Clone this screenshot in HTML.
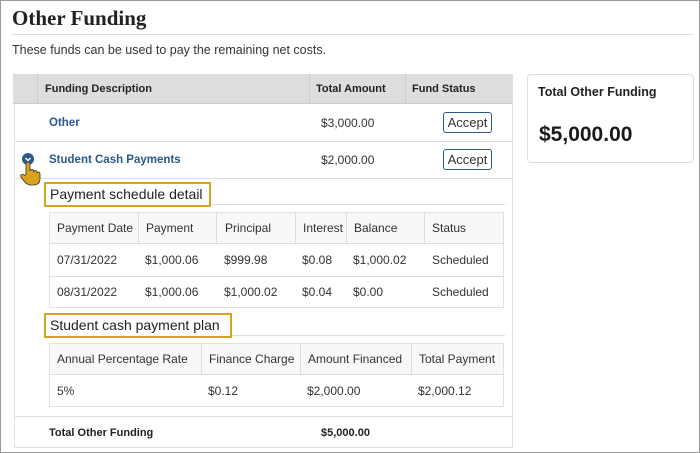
<!DOCTYPE html>
<html><head><meta charset="utf-8"><style>
*{margin:0;padding:0;box-sizing:border-box}
body{width:700px;height:453px;background:#fff;font-family:"Liberation Sans",sans-serif;color:#333;position:relative;overflow:hidden}
.a{position:absolute}
.frame{left:0;top:0;width:700px;height:453px;border:1px solid #999}
.t{position:absolute;white-space:nowrap;font-size:12px;line-height:14px}
.hl{position:absolute;height:1px;background:#ddd}
.vl{position:absolute;width:1px;background:#ddd}
.b{font-weight:bold;color:#222}
.lnk{color:#2a5a8a;font-weight:bold;font-size:11.5px}
.btn{position:absolute;border:1px solid #2a5a8a;border-radius:3px;font-size:13px;color:#333;text-align:center;line-height:19px;background:#fff}
.gold{position:absolute;border:2px solid #d4a31f;font-size:14px;color:#222;padding-left:4px;line-height:21px}
</style></head><body>
<div class="a frame"></div>
<div class="t" style="left:12px;top:6px;font-family:'Liberation Serif',serif;font-weight:bold;font-size:21px;line-height:24px;color:#222">Other Funding</div>
<div class="hl" style="left:12px;top:34px;width:681px"></div>
<div class="t" style="left:12px;top:43px;font-size:12.5px">These funds can be used to pay the remaining net costs.</div>

<div class="a" style="left:13px;top:74px;width:500px;height:30px;background:#dedede;border-bottom:1px solid #ccc"></div>
<div class="vl" style="left:37px;top:74px;height:30px;background:#ccc"></div>
<div class="vl" style="left:309px;top:74px;height:30px;background:#ccc"></div>
<div class="vl" style="left:405px;top:74px;height:30px;background:#ccc"></div>
<div class="t b" style="left:45px;top:82px;font-size:11px">Funding Description</div>
<div class="t b" style="left:316px;top:82px;font-size:11px">Total Amount</div>
<div class="t b" style="left:412px;top:82px;font-size:11px">Fund Status</div>
<div class="vl" style="left:14px;top:104px;height:343px"></div>
<div class="vl" style="left:512px;top:104px;height:343px"></div>

<div class="t lnk" style="left:49px;top:116px">Other</div>
<div class="t" style="left:321px;top:116px">$3,000.00</div>
<div class="btn" style="left:443px;top:112px;width:49px;height:21px">Accept</div>
<div class="hl" style="left:14px;top:141px;width:499px"></div>
<div class="t lnk" style="left:49px;top:153px">Student Cash Payments</div>
<div class="t" style="left:321px;top:153px">$2,000.00</div>
<div class="btn" style="left:443px;top:149px;width:49px;height:21px">Accept</div>
<div class="hl" style="left:14px;top:178px;width:499px"></div>

<svg class="a" style="left:18px;top:150px" width="24" height="36" viewBox="0 0 24 36">
<circle cx="10" cy="9" r="6" fill="#2a5a8a"/>
<path d="M7.5 8 L10 10.5 L12.5 8" stroke="#fff" stroke-width="1.4" fill="none"/>
<path d="M8 24 L8 14 Q8 12 10 12 Q12 12 12 14 L12 21 Q12 19.5 13.8 19.5 Q15.5 19.5 15.5 21 L15.5 22 Q15.5 20.5 17.2 20.5 Q19 20.5 19 22 L19 23 Q19 22 20.5 22 Q22 22 22 24 L22 29 Q22 34 17 35 L12 35 Q8 34 6 31 L3 27 Q2 25 3.5 24.5 Q5 24 6.5 25.5 Z" fill="#d9a21b" stroke="#333" stroke-width="0.8"/>
</svg>

<div class="gold" style="left:44px;top:182px;width:167px;height:25px">Payment schedule detail</div>
<div class="hl" style="left:211px;top:204px;width:294px"></div>
<div class="a" style="left:49px;top:212px;width:455px;height:96px;border:1px solid #e2e2e2"></div>
<div class="a" style="left:50px;top:213px;width:453px;height:31px;background:#f8f8f8;border-bottom:1px solid #ddd"></div>
<div class="hl" style="left:50px;top:276px;width:453px"></div>
<div class="vl" style="left:138px;top:213px;height:31px"></div>
<div class="vl" style="left:216px;top:213px;height:31px"></div>
<div class="vl" style="left:295px;top:213px;height:31px"></div>
<div class="vl" style="left:346px;top:213px;height:31px"></div>
<div class="vl" style="left:424px;top:213px;height:31px"></div>
<div class="t" style="left:57px;top:221px">Payment Date</div>
<div class="t" style="left:146px;top:221px">Payment</div>
<div class="t" style="left:225px;top:221px">Principal</div>
<div class="t" style="left:303px;top:221px">Interest</div>
<div class="t" style="left:354px;top:221px">Balance</div>
<div class="t" style="left:432px;top:221px">Status</div>
<div class="t" style="left:57px;top:253px">07/31/2022</div>
<div class="t" style="left:145px;top:253px">$1,000.06</div>
<div class="t" style="left:224px;top:253px">$999.98</div>
<div class="t" style="left:302px;top:253px">$0.08</div>
<div class="t" style="left:353px;top:253px">$1,000.02</div>
<div class="t" style="left:432px;top:253px">Scheduled</div>
<div class="t" style="left:57px;top:285px">08/31/2022</div>
<div class="t" style="left:145px;top:285px">$1,000.06</div>
<div class="t" style="left:224px;top:285px">$1,000.02</div>
<div class="t" style="left:302px;top:285px">$0.04</div>
<div class="t" style="left:353px;top:285px">$0.00</div>
<div class="t" style="left:432px;top:285px">Scheduled</div>

<div class="gold" style="left:44px;top:313px;width:188px;height:25px">Student cash payment plan</div>
<div class="hl" style="left:232px;top:335px;width:273px"></div>
<div class="a" style="left:49px;top:343px;width:455px;height:64px;border:1px solid #e2e2e2"></div>
<div class="a" style="left:50px;top:344px;width:453px;height:31px;background:#f8f8f8;border-bottom:1px solid #ddd"></div>
<div class="vl" style="left:201px;top:344px;height:31px"></div>
<div class="vl" style="left:300px;top:344px;height:31px"></div>
<div class="vl" style="left:411px;top:344px;height:31px"></div>
<div class="t" style="left:57px;top:352px">Annual Percentage Rate</div>
<div class="t" style="left:209px;top:352px">Finance Charge</div>
<div class="t" style="left:308px;top:352px">Amount Financed</div>
<div class="t" style="left:419px;top:352px">Total Payment</div>
<div class="t" style="left:57px;top:384px">5%</div>
<div class="t" style="left:208px;top:384px">$0.12</div>
<div class="t" style="left:307px;top:384px">$2,000.00</div>
<div class="t" style="left:418px;top:384px">$2,000.12</div>

<div class="hl" style="left:14px;top:416px;width:499px"></div>
<div class="t b" style="left:49px;top:426px;font-size:11px">Total Other Funding</div>
<div class="t b" style="left:321px;top:426px;font-size:11px">$5,000.00</div>
<div class="hl" style="left:14px;top:447px;width:499px"></div>

<div class="a" style="left:527px;top:74px;width:167px;height:89px;border:1px solid #ddd;border-radius:4px"></div>
<div class="t b" style="left:538px;top:85px;font-size:12.5px;font-weight:bold">Total Other Funding</div>
<div class="t b" style="left:539px;top:123px;font-size:21px;line-height:24px;color:#1a1a1a">$5,000.00</div>
</body></html>
